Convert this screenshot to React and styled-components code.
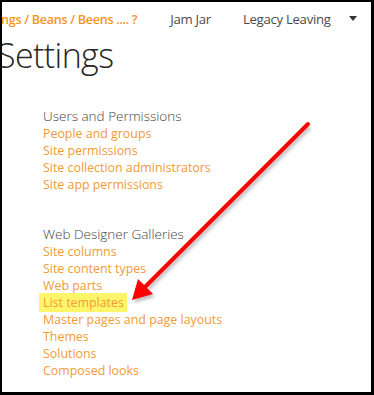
import styled, { createGlobalStyle } from "styled-components";

const GlobalStyle = createGlobalStyle`
  html, body {
    margin: 0;
    padding: 0;
    background: #fff;
  }
`;

const Frame = styled.div`
  position: relative;
  box-sizing: border-box;
  width: 374px;
  height: 395px;
  overflow: hidden;
  background: #fff;
  border-style: solid;
  border-color: #000;
  border-width: 2px 3px 3px 2px;
  font-family: "Open Sans", "Noto Sans", sans-serif;
`;

const TopBar = styled.div`
  display: flex;
  align-items: center;
  height: 34px;
  padding-right: 14px;
  letter-spacing: -0.3px;
  white-space: nowrap;
`;

const Crumb = styled.div`
  color: #f7941d;
  font-size: 12.6px;
  font-weight: 600;
  margin-left: -1px;
`;

const NavLink = styled.div`
  color: #4b4b4b;
  font-size: 13.2px;
  margin-left: ${(p) => p.$gap}px;
`;

const Caret = styled.div`
  margin-left: auto;
  margin-top: -1px;
  width: 0;
  height: 0;
  border-left: 4px solid transparent;
  border-right: 4px solid transparent;
  border-top: 5px solid #333;
`;

const Title = styled.h1`
  margin: -3px 0 0 -5px;
  font-size: 34px;
  font-weight: 300;
  line-height: 44px;
  color: #262626;
  letter-spacing: -0.6px;
`;

const Content = styled.div`
  padding: 30px 0 0 41px;
  display: flex;
  flex-direction: column;
  gap: 32px;
`;

const Group = styled.div`
  display: flex;
  flex-direction: column;
  align-items: flex-start;
`;

const GroupTitle = styled.div`
  font-size: 13.5px;
  font-weight: 300;
  line-height: 18px;
  color: #444;
`;

const Link = styled.a`
  font-size: 12.4px;
  line-height: 17px;
  color: #f29a38;
  text-decoration: none;
  padding: ${(p) => (p.$marked ? "1px 3px 1px 4px" : "0 2px")};
  margin: ${(p) => (p.$marked ? "-1px 0 -1px -4px" : "0 0 0 -2px")};
  background: ${(p) => (p.$marked ? "#fff56b" : "transparent")};
`;

const Arrow = styled.svg`
  position: absolute;
  left: 0;
  top: 0;
  pointer-events: none;
`;

const groups = [
  {
    title: "Users and Permissions",
    links: [
      "People and groups",
      "Site permissions",
      "Site collection administrators",
      "Site app permissions",
    ],
  },
  {
    title: "Web Designer Galleries",
    links: [
      "Site columns",
      "Site content types",
      "Web parts",
      "List templates",
      "Master pages and page layouts",
      "Themes",
      "Solutions",
      "Composed looks",
    ],
  },
];

const App = () => {
  return (
    <>
      <GlobalStyle />
      <Frame>
        <TopBar>
          <Crumb>ngs / Beans / Beens .... ?</Crumb>
          <NavLink $gap={33}>Jam Jar</NavLink>
          <NavLink $gap={32}>Legacy Leaving</NavLink>
          <Caret />
        </TopBar>
        <Title>Settings</Title>
        <Content>
          {groups.map((g) => (
            <Group key={g.title}>
              <GroupTitle>{g.title}</GroupTitle>
              {g.links.map((l) => (
                <Link key={l} href="#" $marked={l === "List templates"}>
                  {l}
                </Link>
              ))}
            </Group>
          ))}
        </Content>
        <Arrow width="374" height="395" viewBox="0 0 374 395">
          <defs>
            <filter id="shade" x="-20%" y="-20%" width="140%" height="140%">
              <feGaussianBlur stdDeviation="1.5" />
            </filter>
          </defs>
          <g transform="translate(2 3)" opacity="0.35" filter="url(#shade)">
            <line x1="306" y1="122" x2="144" y2="284" stroke="#555" strokeWidth="4" />
            <polygon points="130,298 136,277 151,292" fill="#555" />
          </g>
          <line x1="306" y1="122" x2="144" y2="284" stroke="#f00" strokeWidth="4" strokeLinecap="round" />
          <polygon points="130,298 136,277 151,292" fill="#f00" />
        </Arrow>
      </Frame>
    </>
  );
};

export default App;
